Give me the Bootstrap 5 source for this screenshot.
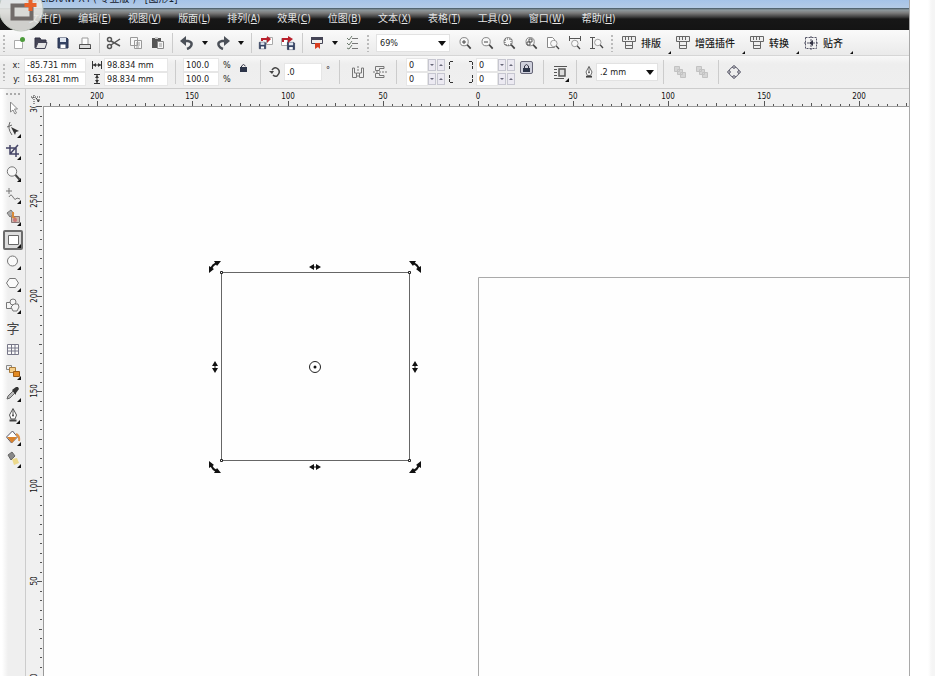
<!DOCTYPE html>
<html lang="zh-CN">
<head>
<meta charset="utf-8">
<meta name="viewport" content="width=device-width, initial-scale=1">
<title>CorelDRAW X4 (专业版) - [图形1]</title>
<link href="https://cdn.jsdelivr.net/npm/bootstrap@5.3.0/dist/css/bootstrap.min.css" rel="stylesheet">
<style>
body{font-family:"DejaVu Sans Condensed","Noto Sans","Noto Sans CJK SC",sans-serif;font-size:9px;line-height:12px;color:#222;background:#fff}
button,input,select{font:inherit;color:inherit;border:0;padding:0;margin:0;background:transparent;border-radius:0}
svg{display:block;flex:none}
.shell{height:100vh}
.app{border-right:1px solid #a9a9a9}
.rim{width:25px;background:linear-gradient(90deg,#fff 18px,#f5f5f5 22px)}
.titlebar{height:8px;background:linear-gradient(#a5c3e8,#b4cbe6);font-size:10px;padding-left:25px}
.titlebar span{line-height:12px;margin-top:-7px;color:#16202c}
.menubar{height:22px;background:linear-gradient(#3e5361 0,#8f999d 2px,#7b7b7b 5px,#3d3d3d 9px,#171717 11px,#141414 100%);padding-left:29px;font-family:"DejaVu Sans Condensed","Noto Sans CJK SC",sans-serif;font-size:10px}
.menubar a{color:#e4e4e4;text-decoration:none;padding-right:17px}
.tools-bar{height:26px;background:linear-gradient(#fafafa,#eaeaea);border-bottom:1px solid #d6d6d6}
.prop-bar{height:33px;background:linear-gradient(#f8f8f8,#eee 8px,#efefef);border-bottom:1px solid #ccc}
.grip{width:8px;height:18px;background:radial-gradient(circle,#bbb 1px,transparent 1px) 0 0/8px 4px}
.tb{width:22px;height:22px;display:flex;align-items:center;justify-content:center;flex:none}
.dd{width:14px;height:22px;display:flex;align-items:center;justify-content:center;flex:none}
.dd::after,.pick::after{content:"";border:3px solid transparent;border-top:4px solid #111;border-bottom:0}
.sep{width:7px;height:20px;flex:none;background:linear-gradient(#ccc,#ccc) center/1px 100% no-repeat}
.sep-w{width:15px;height:24px}
.sep-m{width:11px;height:24px}
.pick{position:relative;height:18px;background:#fff;border:1px solid #e2e2e2;display:flex}
.pick select{width:100%;appearance:none;padding-left:3px;outline:0}
.pick::after{position:absolute;right:3px;top:6px;border-width:4px;border-top-width:5px;border-bottom:0}
.w-zoom{width:74px}.w-line{width:62px}
.plug{display:flex;align-items:center;gap:3px;height:22px;font-family:"Noto Sans CJK SC",sans-serif;font-size:10px;font-weight:500;color:#1c1c1c}
.plug::after,.fly::after{content:"";border-left:4px solid transparent;border-bottom:4px solid #111;align-self:flex-end}
.plug::after{margin:0 3px 0 4px;border-width:3px}
.pair{display:grid;grid-auto-rows:14px;align-items:center}
.pair input,.solo{background:#fff;border:1px solid #e6e6e6;height:14px;padding-left:2px;width:100%}
.pos{grid-template-columns:16px 62px}.pos label{text-align:right;padding-right:4px}
.size{grid-template-columns:13px 64px;margin-left:5px}
.scale{grid-template-columns:36px 14px}
.round{grid-template-columns:22px 18px}
.spin{display:flex;gap:1px}
.spin button{width:8px;height:12px;background:#eceaf2;border:1px solid #c6c6d0;display:flex;align-items:center;justify-content:center}
.spin button::after{content:"";border:2px solid transparent;border-top-color:#667;border-bottom:0}
.spin button+button::after{border-top:0;border-bottom:2px solid #667}
.solo{width:38px;height:18px}
.w10{width:10px}.w14{width:14px}.w20{width:20px}
.locked{width:13px;height:13px;border:1px solid #667;background:#cfd0dc;border-radius:2px;display:flex;align-items:center;justify-content:center;margin:0 3px 9px 4px}
.toolbox{width:26px;background:linear-gradient(90deg,#fff 2px,#efefef 8px);border-right:1px solid #ccc;padding-top:8px;flex:none;position:relative}
.toolbox::before{content:"";position:absolute;left:5px;top:4px;width:16px;height:2px;background:radial-gradient(circle,#aaa 1px,transparent 1px) 0 0/4px 2px}
.fly,.plain{width:20px;height:20px;margin:1px 0 1px 3px;display:flex;align-items:center;justify-content:center;flex:none}
.fly svg{margin-right:-4px}
.toolbox .fly{padding:0 0 2px 0}
.toolbox .on{background:#dcdcdc;border:2px solid #6b6b6b;border-radius:2px;padding:0}
.glyph{font-family:"Noto Sans CJK SC",sans-serif;font-size:13px;color:#444}
.hr-row{height:17px;background:#f0f0f0;flex:none}
.corner{width:17px;flex:none}
.vr-col{width:17px;background:#f0f0f0;flex:none}
.rule text{font-family:"DejaVu Sans Condensed","Noto Sans",sans-serif;font-size:8px;fill:#111;text-anchor:middle}
.rule path{stroke:#555;fill:none;shape-rendering:crispEdges}
.stage{min-width:0;min-height:0;overflow:hidden;background:#fefefe;border-top:1px solid #999;border-left:1px solid #999}
.logo{position:absolute;left:0;top:0;z-index:5;pointer-events:none}
</style>
<script src="https://cdn.jsdelivr.net/npm/bootstrap@5.3.0/dist/js/bootstrap.bundle.min.js"></script>
</head>
<body>
<svg width="0" height="0" class="position-absolute" aria-hidden="true">
<defs>
<symbol id="mag" viewBox="0 0 16 16"><circle cx="7" cy="6.500" r="4.700" fill="#f8f8f8" stroke="#777"/><path d="M10.500 10l4 4.500" stroke="#444" stroke-width="2"/></symbol>
<symbol id="plugin" viewBox="0 0 18 16"><path d="M2.500 1.500h13v5h-13zM5.500 6.500h7v7h-7zM5.500 10.500h7M5.500 2v3M8.500 2v3M11.500 2v3" fill="#eee" stroke="#666"/></symbol>
<symbol id="disk" viewBox="0 0 14 14"><path d="M2 2h9l1 1v9H2z" fill="#344263" stroke="#283350"/><path d="M4 2h6v4H4z" fill="#dfe5ef"/><path d="M4.500 8.500h5V12h-5z" fill="#fff"/></symbol>
<symbol id="pen" viewBox="0 0 14 16"><path d="M7 1.500L3.500 8l1.500 4h4l1.500-4zM7 2v6" fill="#fff" stroke="#555"/><circle cx="7" cy="8.500" r="1" fill="#444"/><path d="M3.500 13.500h7" stroke="#444" stroke-width="2"/></symbol>
</defs></svg>

<div class="shell d-flex overflow-hidden">
<div class="app d-flex flex-column flex-grow-1 overflow-hidden">
  <header class="titlebar d-flex flex-shrink-0 overflow-hidden"><span>CorelDRAW X4 ( 专业版 ) - [图形1]</span></header>
  <nav class="menubar d-flex align-items-center text-nowrap flex-shrink-0" aria-label="菜单">
    <a href="#">文件(<u>F</u>)</a><a href="#">编辑(<u>E</u>)</a><a href="#">视图(<u>V</u>)</a><a href="#">版面(<u>L</u>)</a><a href="#">排列(<u>A</u>)</a><a href="#">效果(<u>C</u>)</a><a href="#">位图(<u>B</u>)</a><a href="#">文本(<u>X</u>)</a><a href="#">表格(<u>T</u>)</a><a href="#">工具(<u>O</u>)</a><a href="#">窗口(<u>W</u>)</a><a href="#">帮助(<u>H</u>)</a>
  </nav>

  <div class="tools-bar d-flex align-items-center flex-shrink-0 text-nowrap" role="toolbar" aria-label="标准">
    <span class="grip"></span>
    <button class="tb" aria-label="新建"><svg width="14" height="14"><path d="M2.500 4.500h6l2 2v6h-8z" fill="#fff" stroke="#aaa"/><circle cx="10.500" cy="3.500" r="2.500" fill="#4c9c3a"/></svg></button>
    <button class="tb" aria-label="打开"><svg width="14" height="14"><path d="M1 12V2h5l1 2h5v2" fill="#445" stroke="#334"/><path d="M1.500 12.500L4 6.500h9l-2 6z" fill="#e6e6e6" stroke="#445"/></svg></button>
    <button class="tb" aria-label="保存"><svg width="14" height="14"><use href="#disk"/></svg></button>
    <button class="tb" aria-label="打印"><svg width="14" height="14"><path d="M4 8V2h6v6" fill="#fff" stroke="#999"/><path d="M1.500 8.500h11v4h-11z" fill="#ddd" stroke="#555"/><path d="M1 12.500h12" stroke="#333"/></svg></button>
    <span class="sep"></span>
    <button class="tb" aria-label="剪切"><svg width="16" height="14" fill="none" stroke="#555" stroke-width="1.500"><path d="M5 5l9 5M5 9l9-6"/><circle cx="3.500" cy="3.500" r="2"/><circle cx="3.500" cy="10.500" r="2"/></svg></button>
    <button class="tb" aria-label="复制"><svg width="14" height="14"><path d="M1.500 1.500h7v8h-7zM5.500 4.500h7v8h-7z" fill="#f8f8f8" stroke="#999"/><path d="M7 7h4M7 9h4M7 11h3" stroke="#999"/></svg></button>
    <button class="tb" aria-label="粘贴"><svg width="14" height="14"><path d="M1 2h9v10H1z" fill="#555"/><path d="M4 1h3v2H4z" fill="#ccc"/><path d="M6.500 5.500h6v7h-6z" fill="#f5f5f5" stroke="#888"/><path d="M8 8h3M8 10h3" stroke="#999"/></svg></button>
    <span class="sep"></span>
    <button class="tb" aria-label="撤销"><svg width="14" height="14"><path d="M3 5h5q5 1 3 5q-1 2-4 3" fill="none" stroke="#4b5058" stroke-width="2.500"/><path d="M0 5l6-5v10z" fill="#4b5058"/></svg></button>
    <button class="dd" aria-label="撤销列表"></button>
    <button class="tb" aria-label="重做"><svg width="14" height="14"><path d="M11 5H6Q1 6 3 10q1 2 4 3" fill="none" stroke="#4b5058" stroke-width="2.500"/><path d="M14 5L8 0v10z" fill="#4b5058"/></svg></button>
    <button class="dd" aria-label="重做列表"></button>
    <span class="sep"></span>
    <button class="tb" aria-label="导入"><svg width="16" height="16"><path d="M8.500 2.500h6v7h-6z" fill="#fff" stroke="#aaa"/><svg x="0" y="6" width="9" height="9"><use href="#disk"/></svg><path d="M4 6V4h6" fill="none" stroke="#b9202c" stroke-width="2"/><path d="M9 1l4 3-4 4z" fill="#b9202c"/></svg></button>
    <button class="tb" aria-label="导出"><svg width="16" height="16"><path d="M1.500 3.500h6v7h-6z" fill="#fff" stroke="#aaa"/><svg x="6" y="6" width="10" height="10"><use href="#disk"/></svg><path d="M3 7V4h6" fill="none" stroke="#b9202c" stroke-width="2"/><path d="M8 1l5 3-5 4z" fill="#b9202c"/></svg></button>
    <span class="sep"></span>
    <button class="tb" aria-label="应用程序启动器"><svg width="14" height="14"><path d="M1.500 1.500h11v6h-11z" fill="#eee" stroke="#445"/><path d="M1 1h12v3H1z" fill="#445"/><path d="M5 7h5v6l-2-2-3 2z" fill="#d83c1e"/></svg></button>
    <button class="dd" aria-label="启动器列表"></button>
    <button class="tb" aria-label="选项"><svg width="14" height="14" fill="none" stroke="#777"><path d="M6 2.500h6M6 7.500h6M6 12.500h6"/><path d="M1 2l2 2 3-4M1 7l2 2 3-4M1 12l2 1 3-4" stroke="#6c7a6c"/></svg></button>
    <span class="grip me-1"></span>
    <span class="pick w-zoom"><select aria-label="缩放级别"><option>69%</option></select></span>
    <button class="tb ms-1" aria-label="放大"><svg width="14" height="14"><use href="#mag"/><path d="M4 6h4M6 4v4" stroke="#444"/></svg></button>
    <button class="tb" aria-label="缩小"><svg width="14" height="14"><use href="#mag"/><path d="M4 6h4" stroke="#444"/></svg></button>
    <button class="tb" aria-label="缩放选定范围"><svg width="14" height="14"><use href="#mag"/><path d="M3 3h6v6H3z" fill="none" stroke="#555" stroke-dasharray="1 1"/></svg></button>
    <button class="tb" aria-label="缩放全部对象"><svg width="14" height="14"><use href="#mag"/><path d="M3 6h3v3H3zM5 3h3v3H5z" fill="none" stroke="#555"/></svg></button>
    <button class="tb" aria-label="显示页面"><svg width="14" height="14"><path d="M1.500 1.500h5l2 2v8h-7z" fill="#fff" stroke="#888"/><svg x="3" y="3" width="11" height="11"><use href="#mag"/></svg></svg></button>
    <button class="tb" aria-label="按页宽显示"><svg width="14" height="14"><path d="M1 2.500h12M1.500 0v5M12.500 0v5" stroke="#555"/><svg x="2" y="3" width="11" height="11"><use href="#mag"/></svg></svg></button>
    <button class="tb" aria-label="按页高显示"><svg width="14" height="14"><path d="M2.500 1v12M0 1.500h5M0 12.500h5" stroke="#555"/><svg x="3" y="2" width="11" height="11"><use href="#mag"/></svg></svg></button>
    <span class="grip me-1"></span>
    <button class="plug"><svg width="18" height="16"><use href="#plugin"/></svg>排版</button>
    <button class="plug"><svg width="18" height="16"><use href="#plugin"/></svg>增强插件</button>
    <button class="plug"><svg width="18" height="16"><use href="#plugin"/></svg>转换</button>
    <button class="plug"><svg width="18" height="16"><path d="M3.500 2.500h11v11h-11zM9 1v14M2 8h14" fill="none" stroke="#556" stroke-dasharray="2 1"/><path d="M11 5v6L7 8z" fill="#334"/></svg>贴齐</button>
  </div>

  <div class="prop-bar d-flex align-items-center flex-shrink-0" role="toolbar" aria-label="属性">
    <span class="grip"></span>
    <div class="pair pos"><label for="px">x:</label><input id="px" value="-85.731 mm"><label for="py">y:</label><input id="py" value="163.281 mm"></div>
    <div class="pair size">
      <svg width="12" height="10" stroke="#333" fill="#333"><path d="M1.500 1v8M10.500 1v8M2 5h8"/><path d="M5 3v4L2 5zM7 3v4l3-2z" stroke="none"/></svg><input aria-label="宽度" value="98.834 mm">
      <svg width="12" height="10" stroke="#333" fill="#333"><path d="M3 .5h6M3 9.500h6M6 1v8"/><path d="M4 4h4L6 1zM4 6h4L6 9z" stroke="none"/></svg><input aria-label="高度" value="98.834 mm">
    </div>
    <span class="sep sep-w"></span>
    <div class="pair scale"><input aria-label="水平缩放" value="100.0"><span class="ps-1">%</span><input aria-label="垂直缩放" value="100.0"><span class="ps-1">%</span></div>
    <button class="tb w20 pb-2" aria-label="锁定比率"><svg width="9" height="10"><path d="M2.500 5V3q2-3 4 0" fill="none" stroke="#334"/><path d="M1 4h7v5H1z" fill="#2c3448"/></svg></button>
    <span class="sep sep-w"></span>
    <label class="d-flex align-items-center" for="rot"><svg width="16" height="14" fill="none" stroke="#444" stroke-width="1.500"><path d="M4 5q3-4 6-1t-1 7q-2 1-4-1"/><path d="M1 6h5L4 9z" fill="#444" stroke="none"/></svg></label>
    <input class="solo" id="rot" value=".0"><span class="w10 ps-1 pb-1">°</span>
    <span class="sep sep-w"></span>
    <button class="tb" aria-label="水平镜像"><svg width="14" height="14" fill="none" stroke="#777"><path d="M7 1v12" stroke-dasharray="2 1"/><path d="M1.500 3v9.500h4V8h-2V3zM12.500 3v9.500h-4V8h2V3z"/></svg></button>
    <button class="tb" aria-label="垂直镜像"><svg width="14" height="14" fill="none" stroke="#777"><path d="M0 7h14" stroke-dasharray="2 1"/><path d="M11 1.500H2.500v4h4v-2H11zM11 12.500H2.500v-4h4v2H11z"/></svg></button>
    <span class="sep sep-m me-1"></span>
    <div class="pair round">
      <input aria-label="左上圆角" value="0"><span class="spin"><button aria-label="减"></button><button aria-label="增"></button></span>
      <input aria-label="左下圆角" value="0"><span class="spin"><button aria-label="减"></button><button aria-label="增"></button></span>
    </div>
    <svg width="30" height="28" fill="none" stroke="#333" stroke-dasharray="3 1"><path d="M3.500 11V3.500H8M26.500 11V3.500H22M3.500 17v7.500H8M26.500 17v7.500H22"/></svg>
    <div class="pair round">
      <input aria-label="右上圆角" value="0"><span class="spin"><button aria-label="减"></button><button aria-label="增"></button></span>
      <input aria-label="右下圆角" value="0"><span class="spin"><button aria-label="减"></button><button aria-label="增"></button></span>
    </div>
    <button class="locked" aria-label="全部圆角"><svg width="9" height="10"><path d="M2.500 5V3q2-3 4 0v2" fill="none" stroke="#334"/><path d="M1 5h7v4H1z" fill="#2c3448"/></svg></button>
    <span class="sep sep-w"></span>
    <button class="fly m-0" aria-label="段落文本换行"><svg width="16" height="16" fill="none" stroke="#555"><path d="M1 2.500h13M1 5.500h3M1 8.500h3M1 11.500h3M1 14.500h10"/><path d="M6 5h6v7H6z" fill="#ddd" stroke-width="1.500"/></svg></button>
    <span class="sep sep-m"></span>
    <label class="d-flex justify-content-center w14" for="lw"><svg width="12" height="14"><use href="#pen"/></svg></label>
    <span class="pick w-line"><select id="lw"><option>.2 mm</option></select></span>
    <span class="sep sep-m"></span>
    <button class="tb" aria-label="到图层前面" disabled><svg width="14" height="14" fill="#d5d5d5" stroke="#c2c2c2"><path d="M1.500 1.500h5v5h-5zM4.500 4.500h5v5h-5zM7.500 7.500h5v5h-5z"/></svg></button>
    <button class="tb" aria-label="到图层后面" disabled><svg width="14" height="14" fill="#d5d5d5" stroke="#c2c2c2"><path d="M7.500 7.500h5v5h-5zM4.500 4.500h5v5h-5zM1.500 1.500h5v5h-5z"/></svg></button>
    <span class="sep sep-m"></span>
    <button class="tb w20" aria-label="转换为曲线"><svg width="14" height="14" fill="#eee" stroke="#556"><circle cx="7" cy="7" r="5"/><circle cx="7" cy="2" r="1.300"/><circle cx="7" cy="12" r="1.300"/><circle cx="2" cy="7" r="1.300"/><circle cx="12" cy="7" r="1.300"/></svg></button>
  </div>

  <main class="d-flex flex-grow-1 overflow-hidden">
    <div class="toolbox d-flex flex-column" role="toolbar" aria-label="工具箱" aria-orientation="vertical">
      <button class="plain" aria-label="挑选"><svg width="14" height="16"><path d="M4.500 2v10l2.500-2 2 4 1.500-1-2-4h3z" fill="#fff" stroke="#888"/></svg></button>
      <button class="fly" aria-label="形状"><svg width="16" height="16"><path d="M5 1q-3 6 2 13M2 6l5-2" fill="none" stroke="#666"/><path d="M6 6l8 4-3 1-1 3z" fill="#333"/></svg></button>
      <button class="fly" aria-label="裁剪"><svg width="16" height="16" fill="none" stroke="#446" stroke-width="1.500"><path d="M5 2v9h9M1 5h10v9M5 11l8-9"/></svg></button>
      <button class="fly" aria-label="缩放"><svg width="16" height="16"><use href="#mag"/></svg></button>
      <button class="fly" aria-label="手绘"><svg width="16" height="16" fill="none" stroke="#777"><path d="M4 1v6M1 4h6M4 10q2-4 4 0t4 1l3 1"/></svg></button>
      <button class="fly" aria-label="智能填充"><svg width="16" height="16"><path d="M2 4l4-3 3 4-4 3z" fill="#aaa" stroke="#777"/><path d="M6.500 7.500h8v6h-8z" fill="#c9b9b0" stroke="#877"/><path d="M8 3v5l3 2" fill="none" stroke="#d98a3a" stroke-width="2"/><circle cx="10" cy="11" r="2" fill="#c77"/></svg></button>
      <button class="fly on" aria-label="矩形"><svg width="16" height="14"><path d="M3.500 2.500h10v9h-10z" fill="#fff" stroke="#666"/></svg></button>
      <button class="fly" aria-label="椭圆形"><svg width="16" height="16"><circle cx="7.500" cy="8" r="5" fill="#fafafa" stroke="#777"/></svg></button>
      <button class="fly" aria-label="多边形"><svg width="16" height="16"><path d="M4.500 3.500h6l3 4.500-3 4.500h-6L1.500 8z" fill="#fafafa" stroke="#777"/></svg></button>
      <button class="fly" aria-label="基本形状"><svg width="16" height="16" fill="#f5f5f5" stroke="#777"><path d="M1.500 5.500h6v6h-6z"/><circle cx="8" cy="5" r="3"/><path d="M6 10l3-3h4l1 3-2 4H8z"/></svg></button>
      <button class="plain glyph" aria-label="文本">字</button>
      <button class="plain" aria-label="表格"><svg width="14" height="14"><path d="M1.500 1.500h11v10h-11zM5.500 2v9M9 2v9M2 5h10M2 8h10" fill="#fafafa" stroke="#778"/></svg></button>
      <button class="fly" aria-label="交互式调和"><svg width="16" height="16"><path d="M1.500 2.500h5v4h-5z" fill="#eee" stroke="#888"/><path d="M4.500 4.500h6v5h-6z" fill="#f5cf8c" stroke="#a87b3a"/><path d="M8.500 8.500h6v5h-6z" fill="#e38a22" stroke="#9c5a14"/></svg></button>
      <button class="fly" aria-label="滴管"><svg width="16" height="16"><path d="M2 14l1-3 5-5 2 2-5 5z" fill="#bbb" stroke="#666"/><path d="M7 5l4-3 2 0 1 2-3 4 0 2z" fill="#333"/></svg></button>
      <button class="fly" aria-label="轮廓"><svg width="14" height="16"><use href="#pen"/></svg></button>
      <button class="fly" aria-label="填充"><svg width="16" height="16"><path d="M1.500 8l6-6 5 6-6 6z" fill="#fff" stroke="#556"/><path d="M2 8h10l-5 6z" fill="#d9822c"/><path d="M11 5q4 2 3 7" stroke="#e0954c" stroke-width="2" fill="none"/></svg></button>
      <button class="fly" aria-label="交互式填充"><svg width="16" height="16"><path d="M3 4l4-3 3 4-4 4z" fill="#888" stroke="#666"/><path d="M7 8l5-1 2 5-5 2z" fill="#ecd98b"/></svg></button>
    </div>
    <div class="d-flex flex-column flex-grow-1 overflow-hidden">
      <div class="hr-row d-flex">
        <svg class="corner" width="17" height="17" stroke="#333" fill="none"><path d="M5 8h10M8 6v9" stroke-dasharray="1 1"/><path d="M10 9l3 4M6 9l1 0M11 12h2v-2"/></svg>
        <svg class="rule flex-fill" id="hrule" width="100" height="17"></svg>
      </div>
      <div class="d-flex flex-grow-1 overflow-hidden">
        <div class="vr-col overflow-hidden"><svg class="rule" id="vrule" width="17" height="1200"></svg></div>
        <div class="stage flex-grow-1">
          <svg width="100%" height="100%" aria-label="绘图窗口">
            <path d="M2400 170.500H434.500V2400" fill="none" stroke="#aaa"/>
            <path d="M177.500 165.500h188v188h-188z" fill="none" stroke="#666"/>
            <g fill="#fff" stroke="#222"><path d="M176.500 164.500h2v2h-2zM364.500 164.500h2v2h-2zM176.500 352.500h2v2h-2zM364.500 352.500h2v2h-2z"/><circle cx="271" cy="260" r="5.500"/></g>
            <circle cx="271" cy="260" r="1.500" fill="#111"/>
            <defs>
              <g id="flat"><path d="M-4 0h8" stroke="#111"/><path d="M-6 0l5-3v6zM6 0l-5-3v6z" fill="#111"/></g>
              <g id="bend"><path d="M-4 3q1-6 7-7" fill="none" stroke="#111" stroke-width="2"/><path d="M-6 6l0-7 5 3zM6-6l-7 0 3 5z" fill="#111"/></g>
            </defs>
            <use href="#flat" x="271" y="160"/><use href="#flat" x="271" y="360"/>
            <use href="#flat" transform="translate(171 260) rotate(90)"/><use href="#flat" transform="translate(371 260) rotate(90)"/>
            <use href="#bend" x="171" y="160"/><use href="#bend" transform="translate(371 160) rotate(90)"/>
            <use href="#bend" transform="translate(371 360) rotate(180)"/><use href="#bend" transform="translate(171 360) rotate(270)"/>
          </svg>
        </div>
      </div>
    </div>
  </main>
</div>
<aside class="rim flex-shrink-0"></aside>
</div>

<svg class="logo" width="48" height="34" aria-hidden="true">
  <circle cx="21" cy="9" r="22" fill="#e9e9e6" fill-opacity=".88" stroke="#bfc6bd"/>
  <path d="M12.500 5.500h19v13h-19z" fill="#d9d9d6" stroke="#716b69" stroke-width="4"/>
  <path d="M30.500-1v12M24.500 5h12" stroke="#e8622a" stroke-width="4"/>
</svg>

<script>
// Rulers: 5-unit ticks, a label at every 50 units.
function drawRuler(id, origin, step, length, vertical) {
  let ticks = "", labels = "";
  for (let i = -60; i <= 80; i++) {
    const p = Math.round(origin + i * step);
    if (p < -6 || p > length) continue;
    const major = i % 10 === 0, len = major ? 5 : i % 5 === 0 ? 3 : 2;
    ticks += vertical ? `M${16 - len} ${p + .5}h${len}` : `M${p + .5} ${17 - len}v${len}`;
    if (major) {
      const n = Math.abs(i * 5);
      labels += vertical ? `<text transform="translate(11 ${p}) rotate(-90)">${n}</text>` : `<text x="${p}" y="10">${n}</text>`;
    }
  }
  document.getElementById(id).innerHTML = `<path d="${ticks}"/>` + labels;
}
function drawRulers() {
  const box = document.querySelector(".stage").getBoundingClientRect();
  drawRuler("hrule", 435, 9.52, box.width, false);
  drawRuler("vrule", 570, 9.5, box.height, true);
}
drawRulers();
addEventListener("resize", drawRulers);
</script>
</body>
</html>
